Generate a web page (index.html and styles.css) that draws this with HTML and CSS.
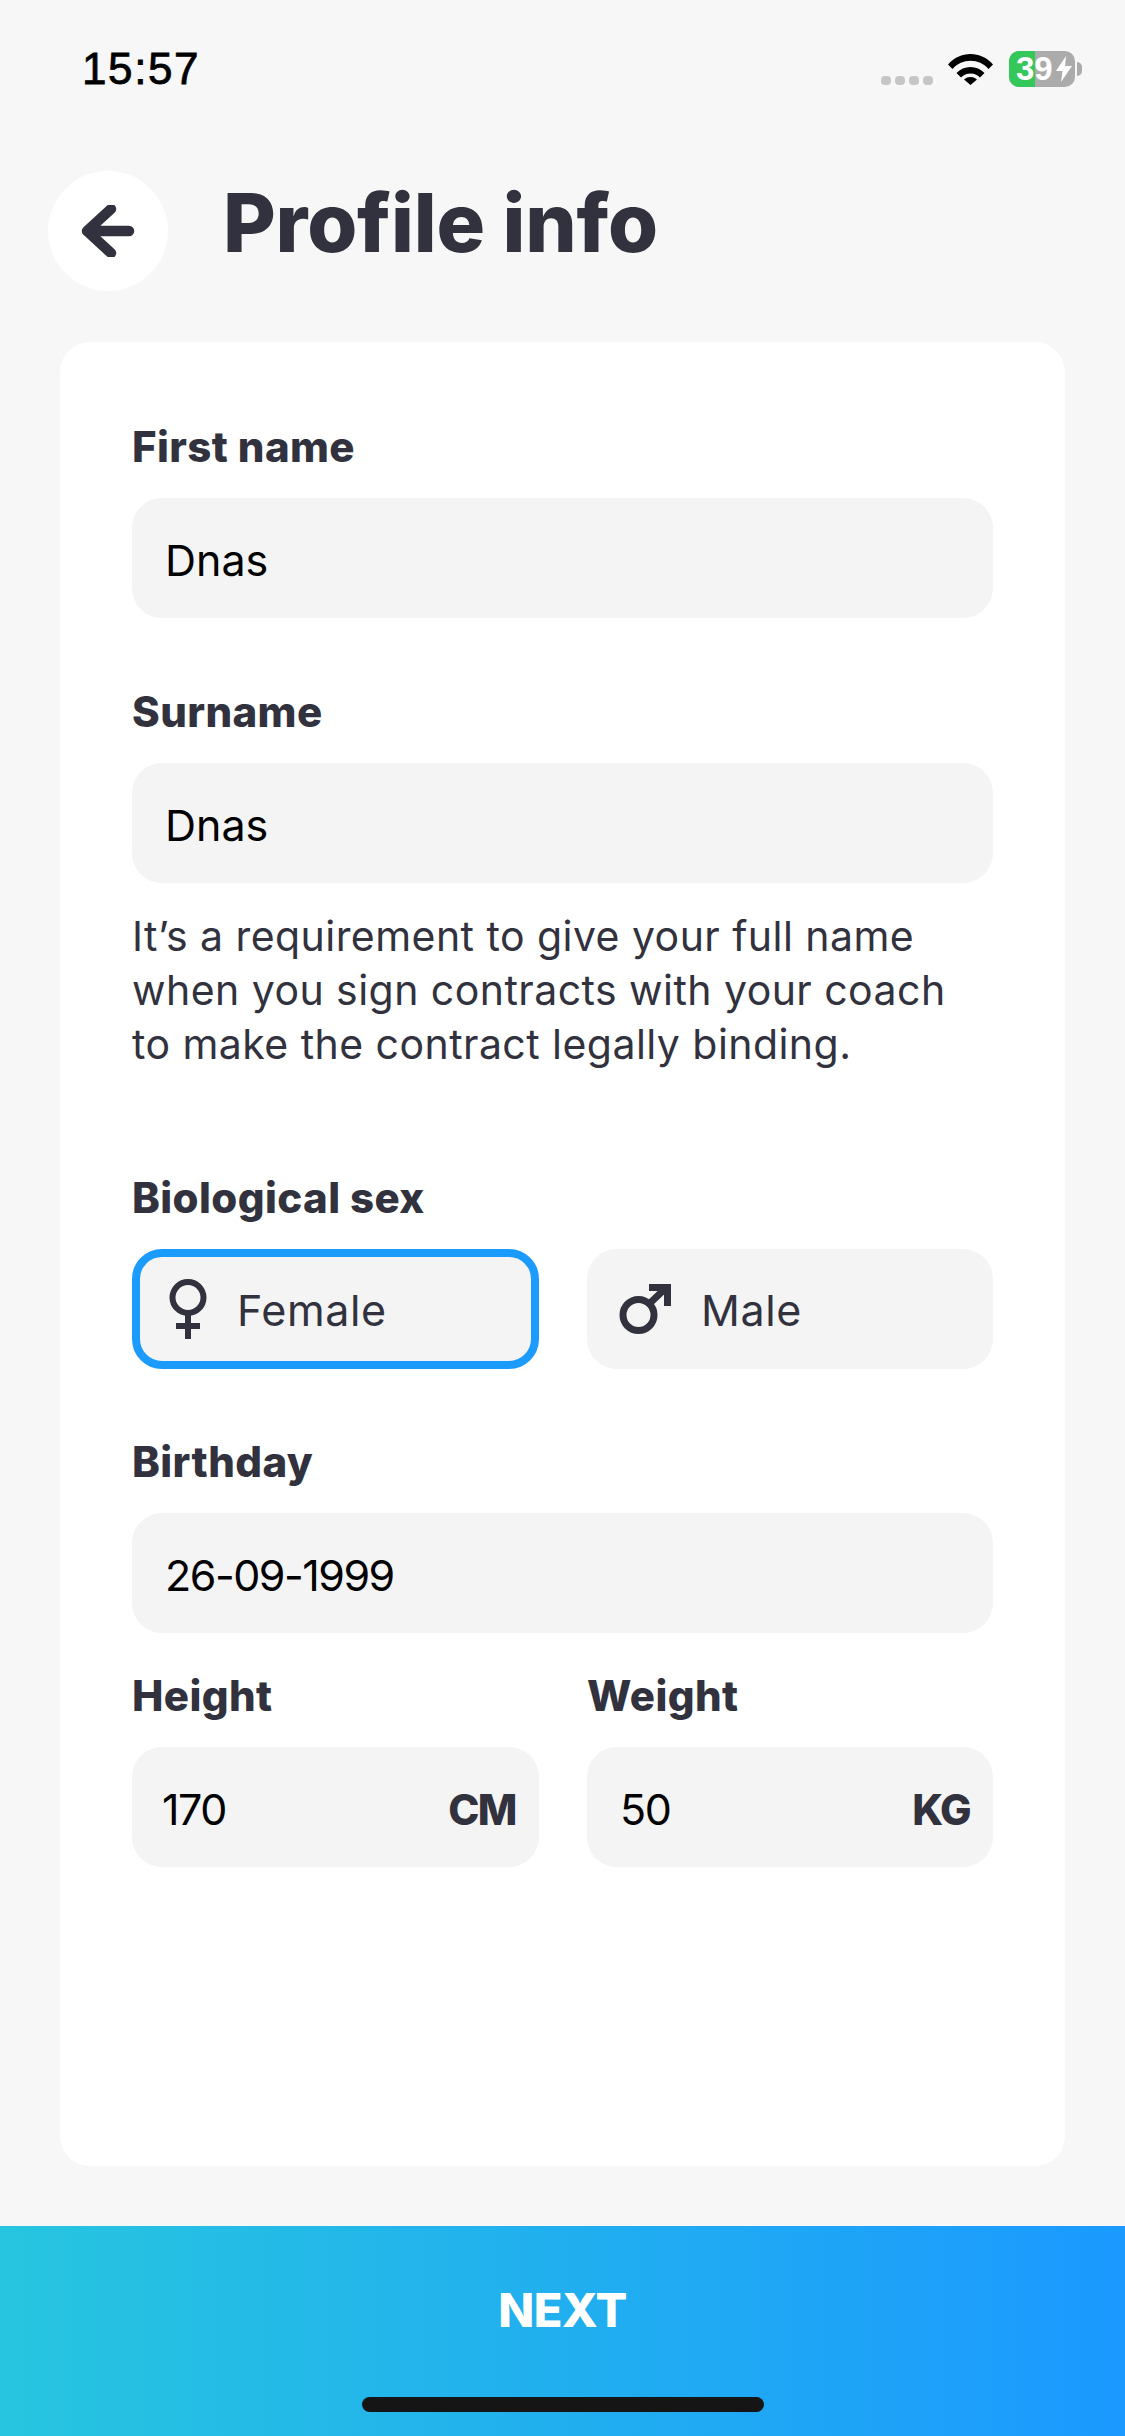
FILE: index.html
```html
<!DOCTYPE html>
<html lang="en">
<head>
<meta charset="utf-8">
<title>Profile info</title>
<link rel="stylesheet" href="styles.css">
</head>
<body>
<div class="page">
  <div class="status">
    <span class="time">15:57</span>
    <div class="status-icons">
      <div class="signal"><i></i><i></i><i></i><i></i></div>
      <svg class="wifi" viewBox="0 0 45 33"><path d="M0 12.5C6 5.500 14 2 22.500 2S39 5.500 45 12.500L40.500 17C35.500 11.500 29.500 8.800 22.500 8.800S9.500 11.500 4.500 17Z"/><path d="M8.500 21C12.300 17 17 15 22.500 15S32.700 17 36.500 21L32 25.500C29.300 22.800 26.300 21.500 22.500 21.500S15.700 22.800 13 25.500Z"/><path d="M16 27.500C18 25.800 20 25 22.500 25S27 25.800 29 27.500L22.500 33Z"/></svg>
      <div class="battery"><div class="battery-fill"></div><span class="battery-num">39</span><svg class="bolt" viewBox="0 0 16 26"><path d="M10 0 0 15H6.500L5 26 16 10H9Z"/></svg></div>
      <div class="nub"></div>
    </div>
  </div>
  <header class="head">
    <div class="back"><svg class="back-icon" viewBox="0 0 54 52"><path d="M30 4 6 26 30 48M7 26H48" /></svg></div>
    <h1 class="title">Profile info</h1>
  </header>
  <main class="card">
    <section class="field">
      <div class="label">First name</div>
      <div class="input"><span class="value">Dnas</span></div>
    </section>
    <section class="field">
      <div class="label">Surname</div>
      <div class="input"><span class="value">Dnas</span></div>
      <p class="help">It’s a requirement to give your full name<br>when you sign contracts with your coach<br>to make the contract legally binding.</p>
    </section>
    <section class="field field-sex">
      <div class="label">Biological sex</div>
      <div class="pair">
        <div class="input choice selected">
          <svg class="female" viewBox="0 0 38 60"><circle cx="19" cy="18.500" r="15.500"/><path d="M19 34V60M7 47H31"/></svg>
          <span class="choice-text">Female</span>
        </div>
        <div class="input choice">
          <svg class="male" viewBox="0 0 52 50"><circle cx="19.500" cy="31" r="15.500"/><path d="M30 20 49 2M30 3.500H48.500V22"/></svg>
          <span class="choice-text">Male</span>
        </div>
      </div>
    </section>
    <section class="field">
      <div class="label">Birthday</div>
      <div class="input"><span class="value digits">26-09-1999</span></div>
    </section>
    <div class="pair pair-measure">
      <section class="col">
        <div class="label">Height</div>
        <div class="input measure measure-h"><span class="value digits">170</span><span class="unit">CM</span></div>
      </section>
      <section class="col">
        <div class="label">Weight</div>
        <div class="input measure measure-w"><span class="value digits">50</span><span class="unit">KG</span></div>
      </section>
    </div>
  </main>
  <footer class="next">
    <span class="next-text">NEXT</span>
    <div class="home"></div>
  </footer>
</div>
</body>
</html>
```
FILE: styles.css
```css
* { box-sizing: border-box; }
html, body { margin: 0; padding: 0; }
body { width: 1125px; height: 2436px; background: #f7f7f7; font-family: "Inter", "Noto Sans", sans-serif; color: #31323e; overflow: hidden; }
.page { width: 1125px; height: 2436px; display: flex; flex-direction: column; }

.status { height: 171px; padding: 42px 0 0 82px; display: flex; justify-content: space-between; align-items: flex-start; flex: none; }
.time { font-family: "Liberation Sans", sans-serif; font-size: 44px; line-height: 54px; font-weight: 400; color: #000; -webkit-text-stroke: 0.8px #000; letter-spacing: 1.6px; }
.status-icons { display: flex; align-items: flex-start; padding: 9px 43px 0 0; }
.signal { display: flex; gap: 4px; margin-top: 25px; }
.signal i { width: 10px; height: 9px; border-radius: 4px; background: #c6c6c6; display: block; }
.wifi { width: 45px; height: 33px; margin: 1px 16px 0 15px; fill: #000; }
.battery { position: relative; width: 66px; height: 36px; border-radius: 10px; background: #ababab; overflow: hidden; }
.battery-fill { position: absolute; left: 0; top: 0; bottom: 0; width: 26px; background: #34c759; }
.battery-num { position: absolute; left: 7px; top: 0; font-family: "Liberation Sans", sans-serif; font-weight: 700; font-size: 33px; line-height: 36px; color: #fff; }
.bolt { position: absolute; left: 47px; top: 5px; width: 16px; height: 26px; fill: #fff; }
.nub { width: 5px; height: 14px; margin: 11px 0 0 2px; background: #ababab; border-radius: 0 6px 6px 0; }

.head { height: 171px; padding-left: 48px; display: flex; align-items: flex-start; flex: none; }
.back { width: 120px; height: 120px; border-radius: 50%; background: #fff; display: flex; align-items: center; justify-content: center; flex: none; }
.back-icon { width: 54px; height: 52px; fill: none; stroke: #31323e; stroke-width: 10.500; stroke-linecap: round; stroke-linejoin: round; }
.title { margin: 0 0 0 55px; font-size: 81px; line-height: 104px; font-weight: 800; color: #31323e; letter-spacing: -0.2px; }

.card { margin: 0 60px; height: 1824px; flex: none; background: #fff; border-radius: 30px; padding: 80px 72px 0; }
.field { margin-bottom: 69px; }
.field-sex { margin-bottom: 68px; }
.label { height: 56px; margin-bottom: 20px; font-size: 42px; line-height: 50px; font-weight: 800; letter-spacing: 0.4px; color: #31323e; }
.input { height: 120px; border-radius: 30px; background: #f4f4f4; display: flex; align-items: center; padding: 4px 0 0 33px; }
.value { font-size: 43px; color: #000; font-weight: 400; }
.digits { letter-spacing: -1.5px; }
.help { margin: 26px 0 0; padding-bottom: 33px; font-size: 41px; line-height: 54px; letter-spacing: 0.45px; color: #31323e; }

.pair { display: grid; grid-template-columns: 407px 406px; gap: 48px; }
.choice { padding-top: 0; }
.choice.selected { border: 8px solid #1c9bff; padding-left: 29px; }
.choice:not(.selected) { padding-left: 32px; }
.choice-text { font-size: 43px; letter-spacing: 0.6px; color: #31323e; padding-top: 2px; }
.female { width: 38px; height: 60px; fill: none; stroke: #31323e; stroke-width: 6; margin-right: 30px; flex: none; }
.male { width: 52px; height: 50px; fill: none; stroke: #31323e; stroke-width: 7; margin-right: 30px; flex: none; }

.pair-measure { margin-top: -31px; }
.measure { justify-content: space-between; padding-right: 23px; }
.measure-h { padding-left: 30px; }
.measure-w { padding-left: 33px; }
.unit { font-size: 42px; font-weight: 800; letter-spacing: -1.5px; color: #31323e; }

.next { margin-top: auto; height: 210px; flex: none; background: linear-gradient(90deg, #27c5df, #1b99ff); position: relative; display: flex; justify-content: center; padding-top: 56px; }
.next-text { font-size: 47px; line-height: 56px; font-weight: 800; letter-spacing: -0.5px; color: #fff; }
.home { position: absolute; left: 362px; top: 171px; width: 402px; height: 15px; border-radius: 8px; background: #151515; }
```
